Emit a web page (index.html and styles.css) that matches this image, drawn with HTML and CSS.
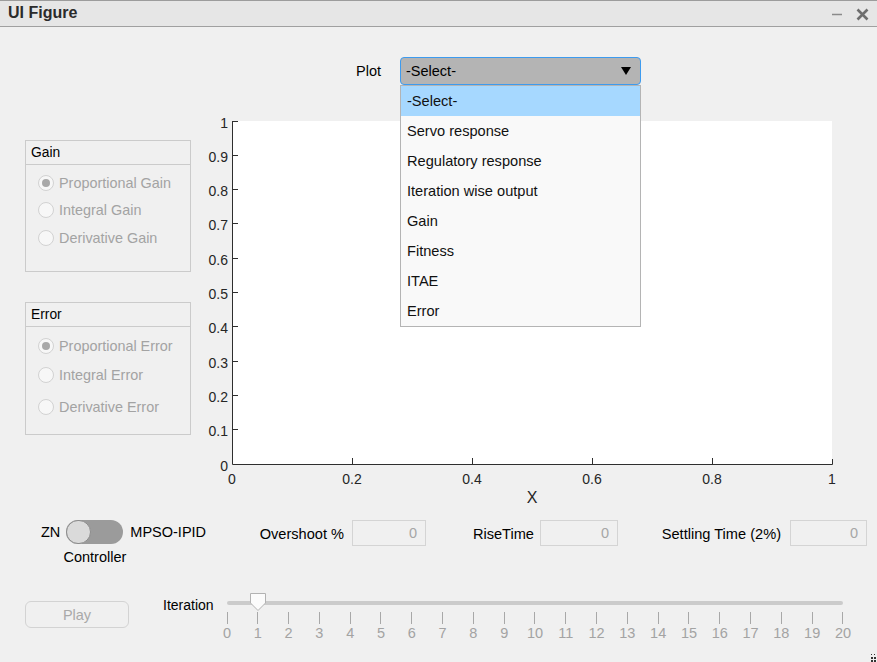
FILE: index.html
```html
<!DOCTYPE html>
<html>
<head>
<meta charset="utf-8">
<title>UI Figure</title>
<link rel="stylesheet" href="styles.css">
</head>
<body>
<div class="window">
  <header class="titlebar">
    <span class="title">UI Figure</span>
    <div class="winbtns">
      <svg class="btn-min" width="12" height="12" viewBox="0 0 12 12"><line x1="1" y1="6.5" x2="11" y2="6.5"/></svg>
      <svg class="btn-close" width="13" height="13" viewBox="0 0 13 13"><path d="M1.5 1.5 L11.5 11.5 M11.5 1.5 L1.5 11.5"/></svg>
    </div>
  </header>

  <main class="content">
    <div class="plot-row">
      <span class="plot-label">Plot</span>
      <div class="dropdown">
        <div class="dd-field">
          <span>-Select-</span>
          <svg class="dd-arrow" width="10" height="8" viewBox="0 0 10 8"><path d="M0 0 H10 L5 8 Z"/></svg>
        </div>
        <ul class="dd-list">
          <li class="selected">-Select-</li>
          <li>Servo response</li>
          <li>Regulatory response</li>
          <li>Iteration wise output</li>
          <li>Gain</li>
          <li>Fitness</li>
          <li>ITAE</li>
          <li>Error</li>
        </ul>
      </div>
    </div>

    <div class="middle">
      <div class="panels">
        <section class="panel panel-gain">
          <div class="panel-head">Gain</div>
          <div class="panel-body">
            <div class="radio checked"><span class="dot"></span>Proportional Gain</div>
            <div class="radio"><span class="dot"></span>Integral Gain</div>
            <div class="radio"><span class="dot"></span>Derivative Gain</div>
          </div>
        </section>
        <section class="panel panel-error">
          <div class="panel-head">Error</div>
          <div class="panel-body">
            <div class="radio checked"><span class="dot"></span>Proportional Error</div>
            <div class="radio"><span class="dot"></span>Integral Error</div>
            <div class="radio"><span class="dot"></span>Derivative Error</div>
          </div>
        </section>
      </div>

      <svg class="chart" width="686" height="400" viewBox="0 0 686 400">
        <rect x="41" y="11" width="600" height="343" fill="#ffffff"/>
        <g class="axis">
          <path d="M41.5 11 V354.5 H641.5 V349"/>
          <path d="M41 11.5 H47 M41 45.5 H47 M41 79.5 H47 M41 113.5 H47 M41 148.5 H47 M41 182.5 H47 M41 216.5 H47 M41 251.5 H47 M41 285.5 H47 M41 319.5 H47"/>
          <path d="M161.5 354 V348 M281.5 354 V348 M401.5 354 V348 M521.5 354 V348"/>
        </g>
        <g class="ylabels">
          <text x="37" y="18">1</text>
          <text x="37" y="52">0.9</text>
          <text x="37" y="86">0.8</text>
          <text x="37" y="120">0.7</text>
          <text x="37" y="155">0.6</text>
          <text x="37" y="189">0.5</text>
          <text x="37" y="223">0.4</text>
          <text x="37" y="258">0.3</text>
          <text x="37" y="292">0.2</text>
          <text x="37" y="326">0.1</text>
          <text x="37" y="361">0</text>
        </g>
        <g class="xlabels">
          <text x="41" y="374">0</text>
          <text x="161" y="374">0.2</text>
          <text x="281" y="374">0.4</text>
          <text x="401" y="374">0.6</text>
          <text x="521" y="374">0.8</text>
          <text x="641" y="374">1</text>
        </g>
        <text class="xtitle" x="341" y="393">X</text>
      </svg>
    </div>

    <div class="controls-row">
      <div class="switch-block">
        <span class="switch-side">ZN</span>
        <div class="switch-col">
          <div class="switch"><span class="knob"></span></div>
          <span class="switch-caption">Controller</span>
        </div>
        <span class="switch-side switch-right">MPSO-IPID</span>
      </div>
      <div class="field-group fg-overshoot">
        <span class="field-label">Overshoot %</span>
        <div class="field">0</div>
      </div>
      <div class="field-group fg-rise">
        <span class="field-label">RiseTime</span>
        <div class="field">0</div>
      </div>
      <div class="field-group fg-settle">
        <span class="field-label">Settling Time (2%)</span>
        <div class="field">0</div>
      </div>
    </div>

    <div class="slider-row">
      <button class="play">Play</button>
      <span class="slider-label">Iteration</span>
      <div class="slider">
        <div class="track"></div>
        <svg class="thumb" width="16" height="18" viewBox="0 0 16 18"><path d="M0.5 0.5 H15.5 V10 L8 17.5 L0.5 10 Z"/></svg>
        <div class="ticks">
          <div class="tick"><i></i><span>0</span></div>
          <div class="tick"><i></i><span>1</span></div>
          <div class="tick"><i></i><span>2</span></div>
          <div class="tick"><i></i><span>3</span></div>
          <div class="tick"><i></i><span>4</span></div>
          <div class="tick"><i></i><span>5</span></div>
          <div class="tick"><i></i><span>6</span></div>
          <div class="tick"><i></i><span>7</span></div>
          <div class="tick"><i></i><span>8</span></div>
          <div class="tick"><i></i><span>9</span></div>
          <div class="tick"><i></i><span>10</span></div>
          <div class="tick"><i></i><span>11</span></div>
          <div class="tick"><i></i><span>12</span></div>
          <div class="tick"><i></i><span>13</span></div>
          <div class="tick"><i></i><span>14</span></div>
          <div class="tick"><i></i><span>15</span></div>
          <div class="tick"><i></i><span>16</span></div>
          <div class="tick"><i></i><span>17</span></div>
          <div class="tick"><i></i><span>18</span></div>
          <div class="tick"><i></i><span>19</span></div>
          <div class="tick"><i></i><span>20</span></div>
        </div>
      </div>
    </div>
  </main>

  <svg class="grip" width="7" height="9" viewBox="0 0 7 9">
    <rect x="1" y="1" width="1" height="1"/><rect x="4" y="1" width="1" height="1"/>
    <rect x="1" y="4" width="2" height="2"/><rect x="4" y="4" width="2" height="2"/>
    <rect x="1" y="7" width="2" height="2"/><rect x="4" y="7" width="2" height="2"/>
  </svg>
</div>
</body>
</html>
```

FILE: styles.css
```css
* { box-sizing: border-box; }

html, body {
  margin: 0;
  padding: 0;
}

body {
  width: 877px;
  height: 662px;
  overflow: hidden;
  background: #f0f0f0;
  font-family: "Liberation Sans", Arial, sans-serif;
  font-size: 14px;
  color: #000;
}

.window {
  position: relative;
  width: 877px;
  height: 662px;
  background: #f0f0f0;
}

/* ---------- title bar ---------- */
.titlebar {
  height: 27px;
  background: #e6e6e6;
  border-top: 1px solid #9c9c9c;
  border-bottom: 1px solid #a0a0a0;
  display: flex;
  align-items: center;
  justify-content: space-between;
  padding: 0 8px 0 8px;
}

.title {
  font-weight: bold;
  font-size: 16px;
  color: #2b2b2b;
  line-height: 18px;
  margin-top: -1px;
}

.winbtns {
  display: flex;
  align-items: center;
  gap: 13px;
  margin-top: 1px;
}

.btn-min line {
  stroke: #8a8a8a;
  stroke-width: 1.5;
}

.btn-close path {
  stroke: #6e6e6e;
  stroke-width: 2.6;
  fill: none;
}

/* ---------- plot selector ---------- */
.plot-row {
  display: flex;
  align-items: center;
  margin-top: 30px;
  padding-left: 356px;
  height: 28px;
}

.plot-label {
  width: 44px;
  font-size: 14.5px;
}

.dropdown {
  position: relative;
  width: 241px;
  height: 28px;
}

.dd-field {
  height: 28px;
  border: 1px solid #3d9bef;
  border-radius: 4px;
  background: #b4b4b4;
  display: flex;
  align-items: center;
  justify-content: space-between;
  padding: 0 9px 0 5px;
  font-size: 14.5px;
}

.dd-arrow path { fill: #000; }

.dd-list {
  position: absolute;
  top: 28px;
  left: 0;
  width: 241px;
  margin: 0;
  padding: 0;
  list-style: none;
  background: #f9f9f9;
  border: 1px solid #b4b4b4;
  z-index: 10;
}

.dd-list li {
  height: 30px;
  line-height: 30px;
  padding-left: 6px;
  font-size: 14.6px;
  color: #111;
}

.dd-list li.selected {
  background: #a6d8ff;
}

/* ---------- middle: panels + chart ---------- */
.middle {
  display: flex;
  margin-top: 25px;
  height: 400px;
}

.panels {
  width: 191px;
  padding-left: 25px;
}

.panel {
  width: 166px;
  border: 1px solid #cbcbcb;
  margin-top: 30px;
}

.panel-gain { height: 132px; }
.panel-error { height: 133px; }

.panel-head {
  height: 24px;
  border-bottom: 1px solid #cbcbcb;
  padding-left: 5px;
  font-size: 13.8px;
  line-height: 23px;
  color: #000;
}

.panel-body {
  padding-top: 4px;
}

.panel-error .panel-body {
  padding-top: 5px;
}

.radio {
  height: 27px;
  display: flex;
  align-items: center;
  padding-left: 12px;
  gap: 5px;
  color: #a3a3a3;
  font-size: 14.4px;
}

.panel-gain .radio:nth-child(3) { height: 28px; margin-top: 1px; }
.panel-error .radio:nth-child(2) { height: 31px; }
.panel-error .radio:nth-child(3) { height: 33px; }

.dot {
  width: 16px;
  height: 16px;
  border-radius: 50%;
  border: 1px solid #d2d2d2;
  background: #f7f7f7;
  display: flex;
  align-items: center;
  justify-content: center;
  flex: none;
}

.radio.checked .dot::after {
  content: "";
  width: 8px;
  height: 8px;
  border-radius: 50%;
  background: #a8a8a8;
}

.chart { display: block; flex: none; }

.chart .axis path {
  stroke: #2e2e2e;
  stroke-width: 1;
  fill: none;
}

.chart text {
  font-family: "Liberation Sans", Arial, sans-serif;
  font-size: 14px;
  fill: #262626;
}

.chart .ylabels text { text-anchor: end; }
.chart .xlabels text { text-anchor: middle; }
.chart .xtitle {
  font-size: 16px;
  text-anchor: middle;
}

/* ---------- controls row ---------- */
.controls-row {
  display: flex;
  align-items: flex-start;
  height: 75px;
  padding-top: 10px;
}

.switch-block {
  display: flex;
  align-items: flex-start;
  margin-left: 41px;
  width: 218px;
}

.switch-side {
  line-height: 24px;
  font-size: 14.5px;
}

.switch-right { margin-left: 7px; }

.switch-col {
  width: 57px;
  margin-left: 6px;
  display: flex;
  flex-direction: column;
  align-items: center;
}

.switch {
  width: 57px;
  height: 24px;
  border-radius: 12px;
  background: #9b9b9b;
  display: flex;
  align-items: center;
}

.knob {
  width: 25px;
  height: 24px;
  border-radius: 12px;
  background: #dadada;
  border: 1px solid #8c8c8c;
}

.switch-caption {
  margin-top: 5px;
  line-height: 16px;
  font-size: 14.5px;
  white-space: nowrap;
}

.field-group {
  display: flex;
  align-items: center;
  height: 26px;
}

.field-label {
  text-align: right;
  white-space: nowrap;
  font-size: 14.6px;
  line-height: 16px;
  padding-top: 2px;
}

.fg-overshoot .field-label { width: 85px; margin-right: 8px; }
.fg-overshoot .field { width: 74px; }

.fg-rise .field-label { width: 108px; margin-right: 6px; }
.fg-rise .field { width: 78px; }

.fg-settle .field-label { width: 163px; margin-right: 9px; }
.fg-settle .field { width: 77px; }

.field {
  height: 26px;
  border: 1px solid #d4d4d4;
  background: #f0f0f0;
  text-align: right;
  padding-right: 8px;
  line-height: 24px;
  color: #a6a6a6;
  font-size: 14.5px;
}

/* ---------- slider row ---------- */
.slider-row {
  display: flex;
  align-items: flex-start;
  height: 77px;
}

.play {
  margin: 16px 0 0 25px;
  width: 104px;
  height: 27px;
  border: 1px solid #d3d3d3;
  border-radius: 6px;
  background: #f0f0f0;
  color: #a9a9a9;
  font-family: "Liberation Sans", Arial, sans-serif;
  font-size: 14.5px;
  padding: 0;
}

.slider-label {
  margin: 12px 0 0 34px;
  width: 64px;
  line-height: 16px;
  font-size: 14px;
}

.slider {
  position: relative;
  width: 616px;
  margin-top: 8px;
}

.track {
  margin-top: 8px;
  height: 4px;
  background: #cbcbcb;
  border-radius: 2px;
}

.thumb {
  position: absolute;
  left: 23px;
  top: 0;
}

.thumb path {
  fill: #fbfbfb;
  stroke: #b2b2b2;
  stroke-width: 1;
}

.ticks {
  display: flex;
  justify-content: space-between;
  margin-top: 7px;
}

.tick {
  width: 0;
  display: flex;
  flex-direction: column;
  align-items: center;
}

.tick i {
  display: block;
  width: 1px;
  height: 12px;
  background: #a8a8a8;
}

.tick span {
  margin-top: 1px;
  line-height: 16px;
  font-size: 14.5px;
  color: #a3a3a3;
  white-space: nowrap;
}

.grip {
  position: absolute;
  right: 0;
  bottom: 0;
}

.grip rect { fill: #333; }
```
